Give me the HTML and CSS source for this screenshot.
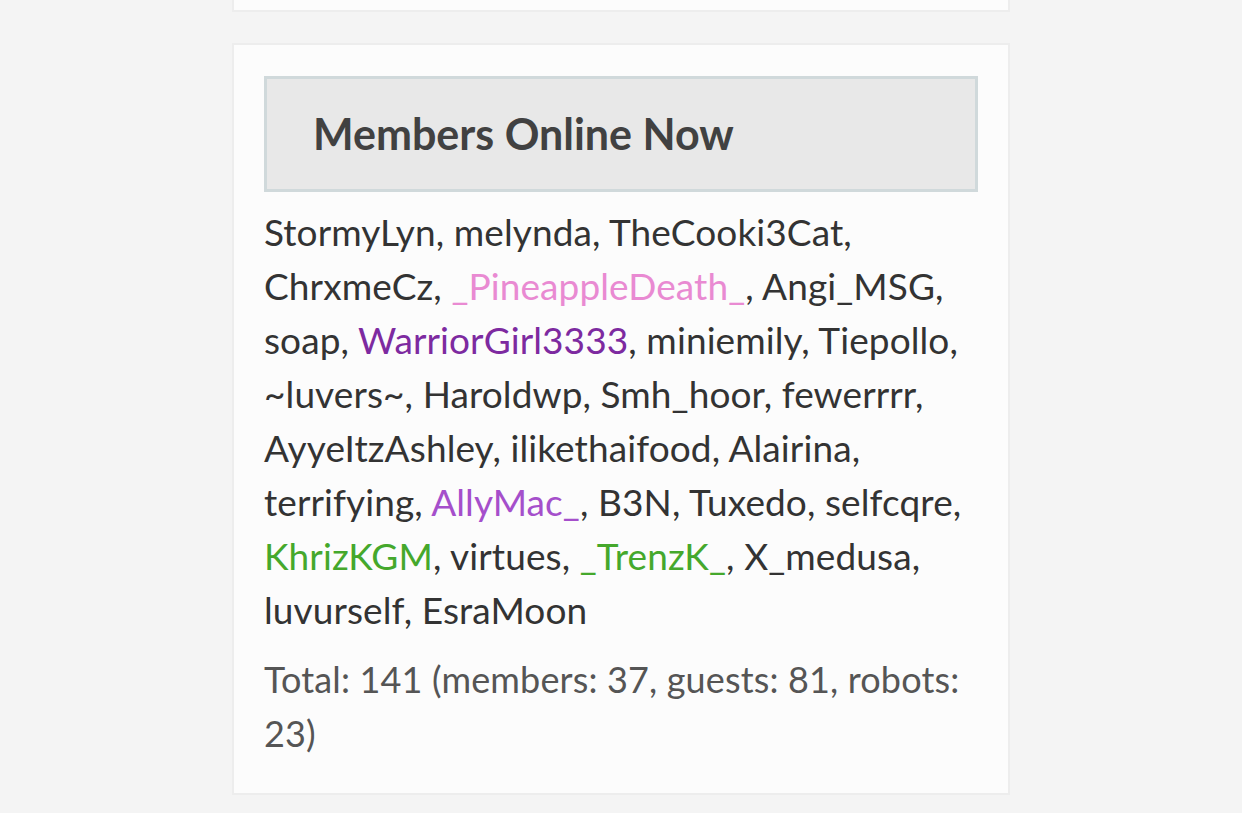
FILE: index.html
```html
<!DOCTYPE html>
<html lang="en">
<head>
<meta charset="utf-8">
<title>Members Online Now</title>
<link rel="stylesheet" href="styles.css">
</head>
<body>
<main class="column">
  <section class="card card-tail"></section>

  <section class="card">
    <header class="block-head">
      <h2 class="block-title">Members Online Now</h2>
    </header>
    <p class="online-list">StormyLyn, melynda, TheCooki3Cat, ChrxmeCz, <span class="role-pink">_PineappleDeath_</span>, Angi_MSG, soap, <span class="role-purple">WarriorGirl3333</span>, miniemily, Tiepollo, ~luvers~, Haroldwp, Smh_hoor, fewerrrr, AyyeItzAshley, ilikethaifood, Alairina, terrifying, <span class="role-violet">AllyMac_</span>, B3N, Tuxedo, selfcqre, <span class="role-green">KhrizKGM</span>, virtues, <span class="role-green">_TrenzK_</span>, X_medusa, luvurself, EsraMoon</p>
    <p class="online-total">Total: 141 (members: 37, guests: 81, robots: 23)</p>
  </section>
</main>
</body>
</html>
```

FILE: styles.css
```css
html, body {
  margin: 0;
  padding: 0;
}

body {
  background: #f4f4f4;
  font-family: Lato, "Open Sans", sans-serif;
  color: #333333;
}

.column {
  width: 778px;
  margin: 0 auto;
  display: flex;
  flex-direction: column;
  gap: 31px;
}

.card {
  box-sizing: border-box;
  background: #fcfcfc;
  border: 2px solid #ededed;
  padding: 31px 30px 33px;
}

.card-tail {
  border-top: 0;
  height: 12px;
  padding: 0;
}

.block-head {
  background: #e8e8e8;
  border: 3px solid #d0d9db;
  height: 116px;
  box-sizing: border-box;
  display: flex;
  align-items: center;
  padding: 0 0 2px 46px;
}

.block-title {
  margin: 0;
  font-size: 43px;
  font-weight: 700;
  color: #414141;
  line-height: 1;
}

.online-list,
.online-total {
  margin: 15px 0 0;
  line-height: 54px;
}

.online-list {
  margin-top: 13px;
  font-size: 37px;
  letter-spacing: 0.1px;
}

.online-total {
  font-size: 36px;
  letter-spacing: 0.15px;
  color: #555555;
}

.role-pink { color: #e98ad2; }
.role-purple { color: #7d2aa0; }
.role-violet { color: #a54fcb; }
.role-green { color: #45a82c; }
```
